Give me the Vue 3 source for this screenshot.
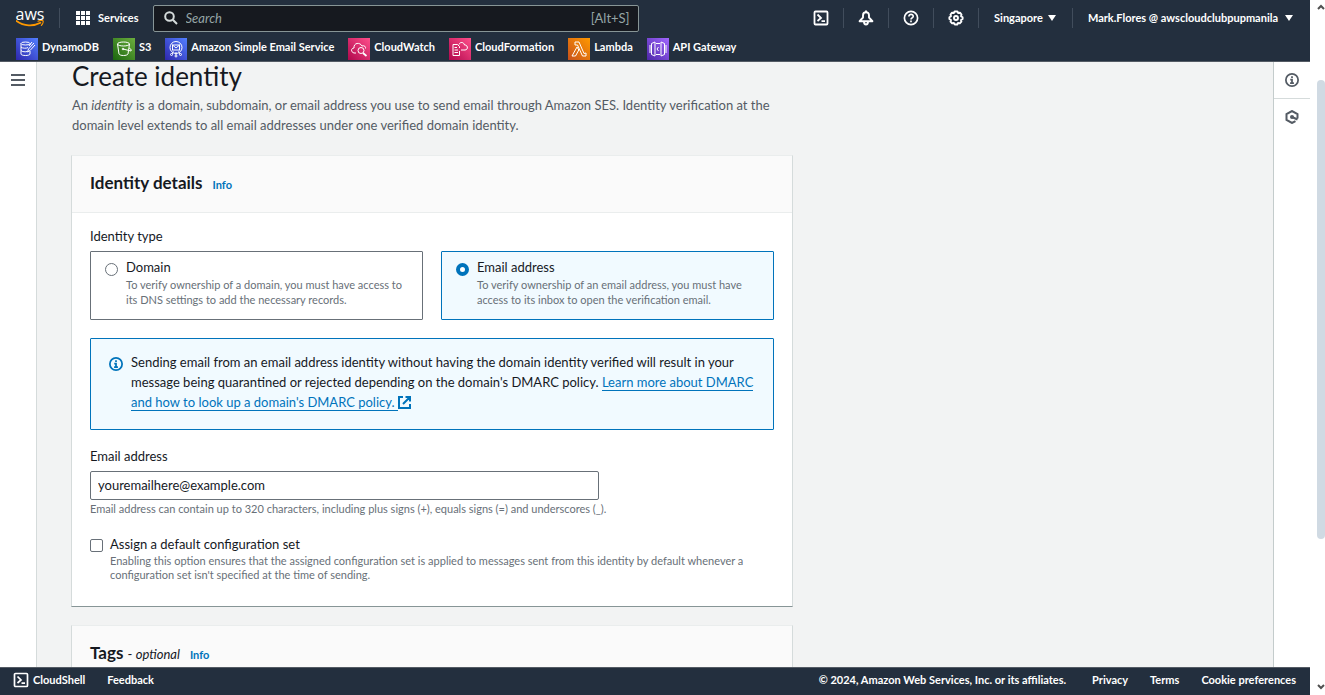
<script setup>
import { ref } from 'vue'

const services = [
  { name: 'DynamoDB', icon: 'dynamo', tone: 'blue' },
  { name: 'S3', icon: 's3', tone: 'green' },
  { name: 'Amazon Simple Email Service', icon: 'ses', tone: 'blue' },
  { name: 'CloudWatch', icon: 'watch', tone: 'pink' },
  { name: 'CloudFormation', icon: 'formation', tone: 'pink' },
  { name: 'Lambda', icon: 'lambda', tone: 'orange' },
  { name: 'API Gateway', icon: 'gateway', tone: 'purple' },
]
const search = ref('')
const identityType = ref('email')
const email = ref('youremailhere@example.com')
const assignSet = ref(false)
</script>

<template>
  <div class="page">
    <header class="top">
      <div class="bar">
        <a class="logo" href="#" aria-label="AWS">
          <span class="logo-word">aws</span>
          <svg class="smile" viewBox="0 0 28 8" aria-hidden="true">
            <path d="M0.5 1C8 6.4 17.500 6.600 24.500 2.800" fill="none" stroke="#f90" stroke-width="1.700" stroke-linecap="round" />
            <path d="M22 1.200C24 .4 26.500 .3 27 .9C27.500 1.800 26.600 4.200 25.400 5.400" fill="none" stroke="#f90" stroke-width="1.200" stroke-linecap="round" />
          </svg>
        </a>
        <span class="sep"></span>
        <button class="services" type="button">
          <svg width="14" height="14" viewBox="0 0 14 14" fill="currentColor" aria-hidden="true">
            <path d="M0 0h4v4H0zM5 0h4v4H5zM10 0h4v4h-4zM0 5h4v4H0zM5 5h4v4H5zM10 5h4v4h-4zM0 10h4v4H0zM5 10h4v4H5zM10 10h4v4h-4z" />
          </svg>
          Services
        </button>
        <label class="search">
          <svg width="14" height="14" viewBox="0 0 14 14" fill="none" stroke="#d5dbdb" stroke-width="2" aria-hidden="true">
            <circle cx="5.500" cy="5.500" r="4.300" /><path d="M8.800 8.800L13 13" />
          </svg>
          <input v-model="search" type="text" placeholder="Search" aria-label="Search" />
          <span>[Alt+S]</span>
        </label>
        <div class="tools">
          <button type="button" aria-label="CloudShell">
            <svg width="16" height="16" viewBox="0 0 16 16" fill="none" stroke="currentColor" stroke-width="1.800" aria-hidden="true">
              <rect x="1.500" y="1.500" width="13" height="13" rx="1" /><path d="M4.500 4.500L8 8L4.500 11M8.500 11.200H12" />
            </svg>
          </button>
          <button type="button" aria-label="Notifications">
            <svg width="16" height="16" viewBox="0 0 16 16" fill="none" stroke="currentColor" stroke-width="1.900" stroke-linejoin="round" aria-hidden="true">
              <path d="M8 2.200C5.900 2.200 5 3.700 5 5.400V7.500L1.600 11.200H14.400L11 7.500V5.400C11 3.700 10.100 2.200 8 2.200ZM6 11.500C6 15.400 10 15.400 10 11.500M8 .4V2" />
            </svg>
          </button>
          <button type="button" aria-label="Help">
            <svg width="16" height="16" viewBox="0 0 16 16" fill="none" stroke="currentColor" stroke-width="1.700" aria-hidden="true">
              <circle cx="8" cy="8" r="6.600" /><path d="M5.900 6.500C5.900 3.700 10.300 3.900 10.200 6.400C10.100 7.900 8 7.800 8 9.500M8 10.500V12.200" />
            </svg>
          </button>
          <button type="button" aria-label="Settings">
            <svg width="16" height="16" viewBox="0 0 16 16" fill="none" stroke="currentColor" stroke-width="1.900" stroke-linejoin="round" aria-hidden="true">
              <path d="M6.600 1.500H9.400L10.200 3L12 2.700L13.500 4.500L13 6.200L14.600 7.200V9L13 10L13.400 11.700L11.800 13.400L10 13L9.200 14.500H6.800L5.900 13L4.100 13.400L2.500 11.700L3 10L1.400 9V7.200L3 6.200L2.500 4.500L4 2.700L5.800 3Z" /><circle cx="8" cy="8" r="2" />
            </svg>
          </button>
          <button class="wide" type="button">Singapore <i class="caret"></i></button>
          <button class="wide account" type="button">Mark.Flores @ awscloudclubpupmanila <i class="caret"></i></button>
        </div>
      </div>
      <nav class="favorites" aria-label="Favorites">
        <a v-for="s in services" :key="s.name" href="#">
          <svg class="tile" :class="s.tone" viewBox="0 0 22 22" fill="none" stroke="#fff" stroke-width="1" aria-hidden="true">
            <g v-if="s.icon === 'dynamo'">
              <ellipse cx="9.500" cy="5.500" rx="4.500" ry="1.500" /><path d="M5 5.500V16C5 18 14 18 14 16V13M14 5.500V7M5 9C6 10.500 11 10.500 12 9.500M5 12.500C6 14 10 14 11 13.500M18 5L12.500 11L11.500 14L14 12.500L19 7M13 8L16 4" />
            </g>
            <g v-else-if="s.icon === 's3'">
              <ellipse cx="10.500" cy="6" rx="6" ry="2" /><path d="M4.500 6L6 16C7 18 14 18 15 16L16.500 6M10 11L18 13C19 11.500 17 10.500 16 10" /><circle cx="10" cy="11" r=".8" />
            </g>
            <g v-else-if="s.icon === 'ses'">
              <circle cx="11" cy="9.500" r="6" /><rect x="7.500" y="7" width="7" height="5" /><path d="M7.500 7L11 10L14.500 7M7 16L8.500 13.500M15 16L13.500 13.500M11 14V17" /><circle cx="6.500" cy="16.500" r="1" /><circle cx="11" cy="18" r="1" /><circle cx="15.500" cy="16.500" r="1" />
            </g>
            <g v-else-if="s.icon === 'watch'">
              <path d="M8 15H6C2.500 14 3 10 6 10C5.500 4.500 12 4 14 8C16.500 7 18 9 17.500 10.500" /><circle cx="13" cy="12.500" r="3" /><path d="M15 15L18.500 18" stroke-width="1.700" />
            </g>
            <g v-else-if="s.icon === 'formation'">
              <path d="M10.500 13V17.500H4V6.500H8.500L10.500 8.500V10M5.500 9.500H8M5.500 12H9M5.500 14.500H9M10 6.500C11 3.500 15 4 15.500 7C19 6.500 19.500 12 16 12H12" />
            </g>
            <g v-else-if="s.icon === 'lambda'">
              <path d="M7 4H11L16 15.500L18 15V18H14.500L9.500 7H7ZM9 9L4 18H7.500L10.800 12Z" />
            </g>
            <g v-else>
              <path d="M8 4L4.500 5.500V16.500L8 18ZM14 4L17.500 5.500V16.500L14 18ZM3 7V15M19 7V15M9 5.500H13M9 16.500H13M11.500 9L10 11L11.500 13" />
            </g>
          </svg>
          {{ s.name }}
        </a>
      </nav>
    </header>

    <div class="body">
      <aside class="left">
        <button type="button" aria-label="Open navigation">
          <svg width="14" height="12" viewBox="0 0 14 12" stroke="#545b64" stroke-width="2" aria-hidden="true"><path d="M0 1H14M0 6H14M0 11H14" /></svg>
        </button>
      </aside>
      <main>
        <div class="content">
          <h1>Create identity</h1>
          <p class="intro">An <em>identity</em> is a domain, subdomain, or email address you use to send email through Amazon SES. Identity verification at the domain level extends to all email addresses under one verified domain identity.</p>

          <section class="card">
            <div class="card-head"><h2>Identity details</h2><a class="info" href="#">Info</a></div>
            <div class="card-body">
              <fieldset>
                <legend>Identity type</legend>
                <div class="tiles">
                  <label class="choice" :class="{ on: identityType === 'domain' }">
                    <input v-model="identityType" type="radio" name="type" value="domain" />
                    <span><b>Domain</b><small>To verify ownership of a domain, you must have access to its DNS settings to add the necessary records.</small></span>
                  </label>
                  <label class="choice" :class="{ on: identityType === 'email' }">
                    <input v-model="identityType" type="radio" name="type" value="email" />
                    <span><b>Email address</b><small>To verify ownership of an email address, you must have access to its inbox to open the verification email.</small></span>
                  </label>
                </div>
              </fieldset>

              <div class="alert">
                <svg width="14" height="14" viewBox="0 0 16 16" fill="none" stroke="#0073bb" stroke-width="2" aria-hidden="true">
                  <circle cx="8" cy="8" r="7" /><path d="M8 3.600V5.600M6 7.500H8V11.500M5.800 11.500H10.200" />
                </svg>
                <p>Sending email from an email address identity without having the domain identity verified will result in your message being quarantined or rejected depending on the domain's DMARC policy. <a href="#"><span>Learn more about DMARC and how to look up a domain's DMARC policy.&nbsp;</span><svg class="external" width="13" height="13" viewBox="0 0 13 13" fill="none" stroke="currentColor" stroke-width="2" aria-hidden="true"><path d="M5 1H1V12H12V8M7.500 1H12V5.500M12 1L5 8" /></svg></a></p>
              </div>

              <div class="field">
                <label for="email">Email address</label>
                <input id="email" v-model="email" type="text" />
                <small>Email address can contain up to 320 characters, including plus signs (+), equals signs (=) and underscores (_).</small>
              </div>

              <label class="check">
                <input v-model="assignSet" type="checkbox" />
                <span><b>Assign a default configuration set</b><small>Enabling this option ensures that the assigned configuration set is applied to messages sent from this identity by default whenever a configuration set isn't specified at the time of sending.</small></span>
              </label>
            </div>
          </section>

          <section class="card">
            <div class="card-head"><h2>Tags <span>- <em>optional</em></span></h2><a class="info" href="#">Info</a></div>
          </section>
        </div>
      </main>
      <aside class="right">
        <button type="button" aria-label="Info">
          <svg width="14" height="14" viewBox="0 0 16 16" fill="none" stroke="#545b64" stroke-width="2" aria-hidden="true">
            <circle cx="8" cy="8" r="7" /><path d="M8 3.600V5.600M6 7.500H8V11.500M5.800 11.500H10.200" />
          </svg>
        </button>
        <button type="button" aria-label="Tutorials">
          <svg width="14" height="14" viewBox="0 0 14 14" fill="none" stroke="#545b64" stroke-width="2" aria-hidden="true">
            <path d="M12.500 8.500V4L7 1L1.500 4V10L7 13L10.500 11.200M7 7L12.500 9.500" /><circle cx="7" cy="7" r="2" fill="#545b64" stroke="none" />
          </svg>
        </button>
      </aside>
    </div>

    <footer>
      <button type="button">
        <svg width="16" height="16" viewBox="0 0 16 16" fill="none" stroke="currentColor" stroke-width="1.700" aria-hidden="true">
          <rect x="1.500" y="1.500" width="13" height="13" rx="1" /><path d="M4.500 4.500L8 8L4.500 11M8.500 11.200H12" />
        </svg>
        CloudShell
      </button>
      <a href="#">Feedback</a>
      <span class="copy">© 2024, Amazon Web Services, Inc. or its affiliates.</span>
      <a href="#">Privacy</a>
      <a href="#">Terms</a>
      <a href="#">Cookie preferences</a>
    </footer>

    <div class="scroll" aria-hidden="true">
      <svg width="8" height="6" viewBox="0 0 8 6" fill="none" stroke="#505050" stroke-width="2"><path d="M1 5L4 2L7 5" /></svg>
      <div class="track"><div class="thumb"></div></div>
      <svg width="8" height="6" viewBox="0 0 8 6" fill="none" stroke="#505050" stroke-width="2"><path d="M1 1L4 4L7 1" /></svg>
    </div>
  </div>
</template>

<style>
body { margin: 0; overflow: hidden; }
</style>

<style scoped>
* { box-sizing: border-box; }
.page {
  display: grid;
  grid-template: auto minmax(0, 1fr) auto / minmax(0, 1fr) 15px;
  height: 100vh;
  background: #fff;
  color: #16191f;
  font: 13px/20px Lato, "Noto Sans", sans-serif;
}
button { border: 0; padding: 0; background: none; color: inherit; font: inherit; }
svg { flex: none; }
a { color: inherit; text-decoration: none; }
b { font-weight: 400; }
small { display: block; color: #687078; font-size: 11px; line-height: 15px; }
.top { background: #232f3e; color: #fff; border-bottom: 1px solid #545b64; font-size: 11px; font-weight: 700; }
.bar { display: flex; align-items: center; height: 36px; padding: 0 16px; }
.logo { display: flex; flex-direction: column; align-items: center; width: 28px; }
.logo-word { font: 400 16px/12px "Open Sans", sans-serif; }
.smile { width: 28px; height: 8px; }
.sep { width: 1px; height: 20px; margin: 0 16px 0 15px; background: #414d5c; }
.services { display: flex; align-items: center; gap: 8px; }
.search { display: flex; align-items: center; flex: 0 1 486px; height: 27px; margin-left: 14px; padding: 0 8px 0 10px; gap: 8px; border: 1px solid #879596; border-radius: 2px; background: #16191f; color: #95a5a6; font-size: 13px; font-weight: 400; }
.search input { flex: 1; min-width: 0; border: 0; padding: 0; background: none; color: #fff; font: inherit; outline: 0; }
.search input::placeholder { color: #95a5a6; font-style: italic; opacity: 1; }
.tools { display: flex; align-items: center; margin-left: auto; }
.tools button { display: flex; align-items: center; justify-content: center; gap: 5px; width: 45px; height: 20px; border-left: 1px solid #414d5c; white-space: nowrap; }
.tools button:first-child { border-left: 0; }
.tools .wide { width: auto; padding: 0 16px 0 15px; }
.tools .account { gap: 7px; padding-right: 1px; }
.caret { border: 4px solid transparent; border-top: 6px solid #fff; border-bottom: 0; }
.favorites { display: flex; gap: 14px; height: 25px; padding: 0 16px; }
.favorites a { display: flex; align-items: flex-start; gap: 4px; line-height: 22px; white-space: nowrap; }
.tile { width: 22px; height: 22px; margin-top: 2px; }
.blue { background: linear-gradient(45deg, #2e27ad, #527fff); }
.green { background: linear-gradient(45deg, #1b660f, #6cae3e); }
.pink { background: linear-gradient(45deg, #b0084d, #ff4f8b); }
.orange { background: linear-gradient(45deg, #c8511b, #f90); }
.purple { background: linear-gradient(45deg, #4d27a8, #a166ff); }
.body { grid-area: 2 / 1; display: flex; min-height: 0; }
.left { flex: 0 0 37px; border-right: 1px solid #d5dbdb; }
.left button { display: flex; justify-content: center; width: 100%; padding-top: 12px; }
.right { flex: 0 0 37px; border-left: 1px solid #c4cccc; }
.right button { display: flex; align-items: center; justify-content: center; width: 100%; height: 36px; }
.right button:first-child { height: 37px; border-bottom: 1px solid #d5dbdb; }
main { flex: 1; min-width: 0; overflow: hidden; padding: 0 34px; background: #f2f3f3; }
.content { max-width: 722px; }
h1 { margin: 0; padding-left: 1px; font-size: 26px; font-weight: 400; line-height: 29px; }
.intro { margin: 4px 0 20px; padding-left: 1px; color: #545b64; }
.card { margin-bottom: 18px; border: 1px solid #d5dbdb; border-top-color: #eaeded; border-bottom-color: #879596; background: #fff; }
.card-head { display: flex; align-items: baseline; gap: 10px; padding: 15px 18px 18px; border-bottom: 1px solid #eaeded; background: #fafafa; }
h2 { margin: 0; font-size: 17px; font-weight: 700; line-height: 23px; }
h2 span { font-size: 13px; font-weight: 400; line-height: 16px; }
.info { color: #0073bb; font-size: 11px; font-weight: 700; line-height: 16px; }
.card-body { padding: 13px 18px 24px; }
fieldset { margin: 0; padding: 0; border: 0; }
legend { padding: 0; margin-bottom: 5px; }
.tiles { display: grid; grid-template-columns: 1fr 1fr; gap: 18px; }
.choice { display: flex; align-items: flex-start; gap: 8px; padding: 5px 14px 12px; border: 1px solid #687078; border-radius: 1px; }
.choice.on { border-color: #0073bb; background: #f1faff; }
.choice input { appearance: none; flex: none; width: 13px; height: 13px; margin: 6px 0 0; border: 1px solid #687078; border-radius: 50%; background: #fff; }
.choice input:checked { border: 4px solid #0073bb; }
.alert { display: flex; gap: 8px; margin-top: 18px; padding: 13px 18px 17px; border: 1px solid #0073bb; border-radius: 1px; background: #f1faff; }
.alert > svg { margin-top: 5px; }
.alert p { margin: 0; }
.alert a { color: #0073bb; }
.alert a span { border-bottom: 1px solid; }
.external { vertical-align: -2px; }
.field { margin-top: 16px; }
.field label { display: block; }
.field input { display: block; width: 75%; max-width: 509px; height: 29px; margin: 5px 0 1px; padding: 0 7px 2px; border: 1px solid #687078; border-radius: 2px; background: #fff; color: #16191f; font: inherit; }
.check { display: flex; gap: 7px; align-items: flex-start; margin-top: 18px; }
.check small { line-height: 14px; }
.check input { appearance: none; flex: none; width: 13px; height: 13px; margin: 5px 0 0; border: 1px solid #687078; border-radius: 2px; background: #fff; }
footer { display: flex; grid-area: 3 / 1; align-items: center; height: 28px; padding: 0 14px 3px 13px; gap: 22px; border-top: 1px solid #545b64; background: #232f3e; color: #fff; font-size: 11px; font-weight: 700; white-space: nowrap; }
footer button { display: flex; align-items: center; gap: 4px; }
.copy { margin-left: auto; margin-right: 4px; }
.scroll { display: flex; grid-area: 1 / 2 / 4 / 3; flex-direction: column; align-items: flex-end; padding: 4px 0 5px; }
.track { flex: 1; width: 8px; padding-top: 70px; }
.thumb { height: 76%; border-radius: 4px; background: #d0dae3; }
</style>
